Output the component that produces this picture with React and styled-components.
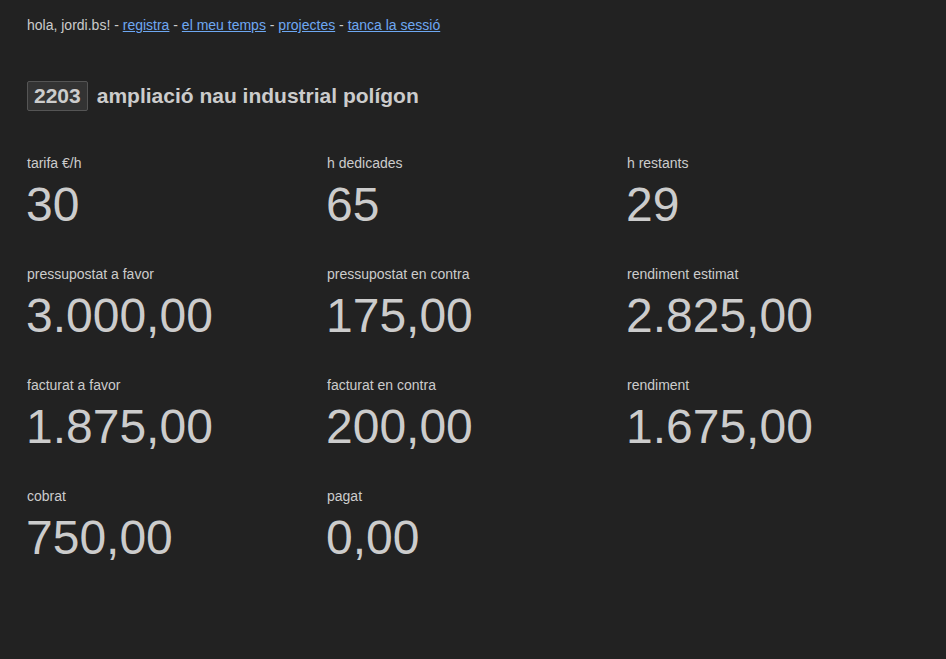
import React from "react";
import styled, { createGlobalStyle } from "styled-components";

const GlobalStyle = createGlobalStyle`
  html, body {
    margin: 0;
    padding: 0;
    background: #222222;
    color: #cccccc;
    font-family: "Liberation Sans", Arial, sans-serif;
  }
`;

const Page = styled.div`
  padding: 17px 27px 40px;
  min-height: 659px;
  box-sizing: border-box;
`;

const Nav = styled.div`
  font-size: 14px;
  line-height: 16px;
  color: #cccccc;
`;

const NavLink = styled.a`
  color: #6ea8f2;
  text-decoration: underline;
`;

const Title = styled.h1`
  display: flex;
  align-items: center;
  gap: 9px;
  margin: 48px 0 0;
  font-size: 21px;
  font-weight: bold;
  color: #cccccc;
`;

const Code = styled.span`
  display: inline-block;
  padding: 4px 6px 4px;
  background: #333333;
  border: 1px solid #555555;
  border-radius: 2px;
  line-height: 20px;
`;

const Grid = styled.div`
  display: grid;
  grid-template-columns: repeat(3, 300px);
  row-gap: 34px;
  margin-top: 44px;
`;

const Stat = styled.div`
  display: flex;
  flex-direction: column;
  gap: 6px;
`;

const Label = styled.div`
  font-size: 14px;
  line-height: 16px;
  color: #cccccc;
`;

const Value = styled.div`
  font-size: 48px;
  line-height: 55px;
  color: #cccccc;
  margin-left: -1px;
`;

const stats = [
  ["tarifa €/h", "30"],
  ["h dedicades", "65"],
  ["h restants", "29"],
  ["pressupostat a favor", "3.000,00"],
  ["pressupostat en contra", "175,00"],
  ["rendiment estimat", "2.825,00"],
  ["facturat a favor", "1.875,00"],
  ["facturat en contra", "200,00"],
  ["rendiment", "1.675,00"],
  ["cobrat", "750,00"],
  ["pagat", "0,00"],
];

const App = () => {
  return (
    <Page>
      <GlobalStyle />
      <Nav>
        hola, jordi.bs! - <NavLink href="#">registra</NavLink> -{" "}
        <NavLink href="#">el meu temps</NavLink> -{" "}
        <NavLink href="#">projectes</NavLink> -{" "}
        <NavLink href="#">tanca la sessió</NavLink>
      </Nav>
      <Title>
        <Code>2203</Code>
        ampliació nau industrial polígon
      </Title>
      <Grid>
        {stats.map(([label, value]) => (
          <Stat key={label}>
            <Label>{label}</Label>
            <Value>{value}</Value>
          </Stat>
        ))}
      </Grid>
    </Page>
  );
};

export default App;
